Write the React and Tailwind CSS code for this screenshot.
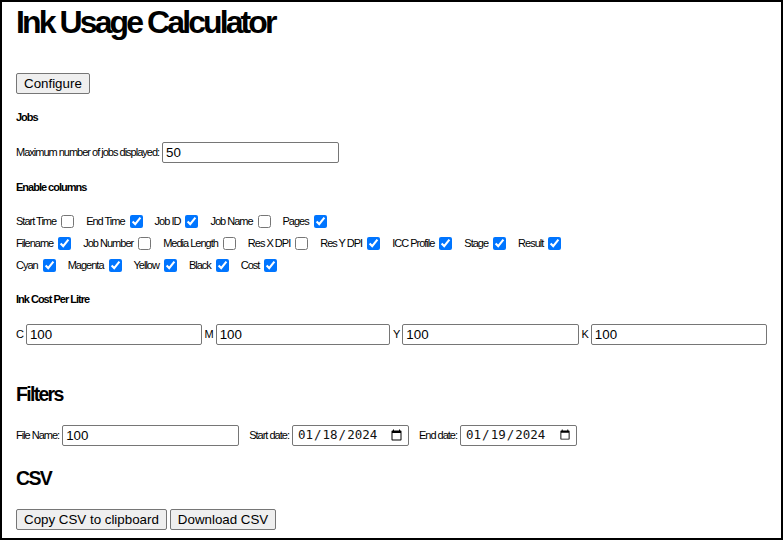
import { useState } from 'react'

const SANS = "font-['Liberation_Sans',Arial,sans-serif]"
const CONTROL = "font-['Liberation_Sans',Arial,sans-serif] text-[13.33px] tracking-normal text-black"

const COLUMN_ROWS = [
  [
    ['Start Time', false],
    ['End Time', true],
    ['Job ID', true],
    ['Job Name', false],
    ['Pages', true],
  ],
  [
    ['Filename', true],
    ['Job Number', false],
    ['Media Length', false],
    ['Res X DPI', false],
    ['Res Y DPI', true],
    ['ICC Profile', true],
    ['Stage', true],
    ['Result', true],
  ],
  [
    ['Cyan', true],
    ['Magenta', true],
    ['Yellow', true],
    ['Black', true],
    ['Cost', true],
  ],
]

function Button({ children }) {
  return (
    <button className={`${CONTROL} h-[21px] px-[7px] leading-[15px] bg-[#efefef] border border-[#767676] rounded-[2px]`}>
      {children}
    </button>
  )
}

function TextInput({ value, className = '' }) {
  return (
    <input
      type="text"
      defaultValue={value}
      className={`${CONTROL} h-[21px] px-[3px] border border-[#767676] rounded-[2px] bg-white outline-none ${className}`}
    />
  )
}

function DateInput({ value }) {
  return (
    <input
      type="date"
      defaultValue={value}
      className="font-['DejaVu_Sans_Mono','Liberation_Mono',monospace] text-[12.5px] tracking-normal text-[#111] h-[21px] w-[117px] pl-[4px] pr-[3px] border border-[#767676] rounded-[2px] bg-white outline-none"
    />
  )
}

function SubHeading({ children, className = '' }) {
  return <h5 className={`text-[11px] leading-[13px] tracking-[-1px] font-bold ${className}`}>{children}</h5>
}

function SectionHeading({ children, className = '' }) {
  return <h3 className={`text-[19.5px] leading-[23px] tracking-[-1.7px] font-bold ${className}`}>{children}</h3>
}

export default function App() {
  const [columns] = useState(COLUMN_ROWS)

  return (
    <div className={`${SANS} w-full h-[540px] overflow-hidden border-2 border-black px-[14px] pt-[2px] text-black bg-white`}>
      <h1 className="text-[32px] leading-[36px] tracking-[-2.9px] font-bold">Ink Usage Calculator</h1>

      <div className="mt-[31px]">
        <Button>Configure</Button>
      </div>

      {/* Jobs */}
      <SubHeading className="mt-[16px]">Jobs</SubHeading>
      <div className="mt-[18px] flex items-center gap-[3px] text-[11px] tracking-[-1px]">
        <span>Maximum number of jobs displayed:</span>
        <TextInput value="50" className="w-[177px]" />
      </div>

      {/* Column toggles */}
      <SubHeading className="mt-[18px]">Enable columns</SubHeading>
      <div className="mt-[16px] text-[11px] tracking-[-1px]">
        {columns.map((row, i) => (
          <div key={i} className="h-[22px] flex items-center gap-[12px]">
            {row.map(([name, on]) => (
              <label key={name} className="flex items-center">
                <span>{name}</span>
                <input type="checkbox" defaultChecked={on} className="ml-[5px] w-[13px] h-[13px]" />
              </label>
            ))}
          </div>
        ))}
      </div>

      {/* Ink cost */}
      <SubHeading className="mt-[17px]">Ink Cost Per Litre</SubHeading>
      <div className="mt-[18px] flex items-center gap-[3px] text-[11px] tracking-[-1px]">
        {['C', 'M', 'Y', 'K'].map((ink) => (
          <div key={ink} className="flex-1 flex items-center gap-[3px] min-w-0">
            <span>{ink}</span>
            <TextInput value="100" className="flex-1 min-w-0" />
          </div>
        ))}
      </div>

      {/* Filters */}
      <SectionHeading className="mt-[38px]">Filters</SectionHeading>
      <div className="mt-[19px] flex items-center text-[11px] tracking-[-1px]">
        <span>File Name:</span>
        <TextInput value="100" className="ml-[3px] w-[177px]" />
        <span className="ml-[10px]">Start date:</span>
        <span className="ml-[3px] flex">
          <DateInput value="2024-01-18" />
        </span>
        <span className="ml-[10px]">End date:</span>
        <span className="ml-[3px] flex">
          <DateInput value="2024-01-19" />
        </span>
      </div>

      {/* CSV */}
      <SectionHeading className="mt-[21px]">CSV</SectionHeading>
      <div className="mt-[19px] flex items-center gap-[3px]">
        <Button>Copy CSV to clipboard</Button>
        <Button>Download CSV</Button>
      </div>
    </div>
  )
}
